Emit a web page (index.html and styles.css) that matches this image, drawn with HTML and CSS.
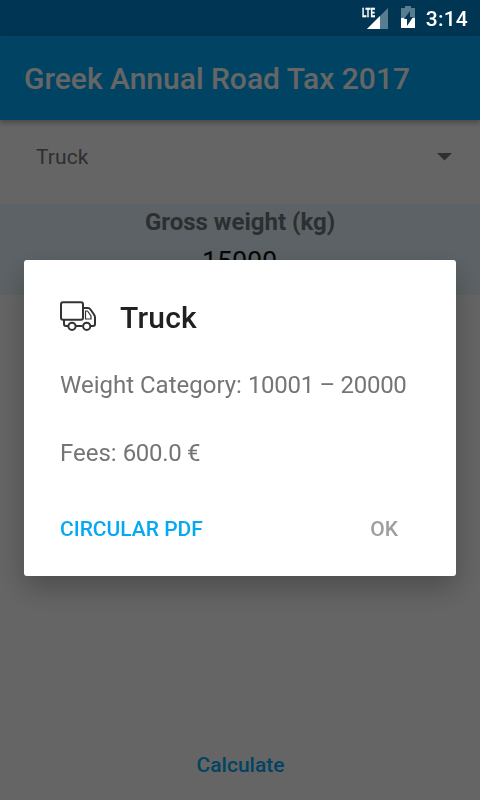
FILE: index.html
```
<!DOCTYPE html>
<html lang="en">
  <head>
    <meta charset="UTF-8" />
    <meta name="viewport" content="width=device-width, initial-scale=1.0" />
    <title>Greek Annual Road Tax 2017</title>
    <link rel="stylesheet" href="styles.css">
  </head>
  <body>
    <div class="screen">
      <div class="status-spacer"></div>
      <header class="app-bar">
        <h1 class="app-title">Greek Annual Road Tax 2017</h1>
      </header>

      <main class="main-content">
        <div class="spinner">
          <span>Truck</span>
          <svg class="arrow" width="15" height="8" viewBox="0 0 15 8"><path d="M0 0h15L7.5 7.5z" fill="currentColor" /></svg>
        </div>
        <section class="weight">
          <div class="weight-label">Gross weight (kg)</div>
          <div class="weight-value">15000</div>
        </section>
      </main>

      <footer class="bottom-bar">
        <button class="calculate-btn">Calculate</button>
      </footer>
    </div>

    <!-- Result dialog -->
    <div class="overlay">
      <div class="dialog" role="dialog">
        <div class="dialog-header">
          <svg width="36" height="36" viewBox="0 0 36 36" fill="none" stroke="#333" stroke-width="2">
            <rect x="1" y="3.200" width="22" height="17.500" rx="2" />
            <path d="M23 9h5q1.500 0 2.500 1.500l3.500 5q1 1.500 1 3v6.500q0 2-2 2h-2M4 21v4q0 2 2 2h2M16 27h6.500" />
            <path d="M25.500 20v-8h2l3.500 5v3z" stroke-width="1.200" />
            <circle cx="12" cy="27.300" r="3.600" />
            <circle cx="26.700" cy="27.300" r="3.600" />
          </svg>
          <h2 class="dialog-title">Truck</h2>
        </div>
        <p class="dialog-text">Weight Category: <span class="value">10001 – 20000</span></p>
        <p class="dialog-text">Fees: <span class="value">600.0 €</span></p>
        <div class="dialog-actions">
          <button class="link-btn">CIRCULAR PDF</button>
          <button class="ok-btn">OK</button>
        </div>
      </div>
    </div>

    <!-- System status bar stays above the overlay -->
    <div class="status-bar">
      <svg class="signal" width="27" height="24" viewBox="0 0 27 24">
        <path d="M26 3v21H5z" fill="#fff" fill-opacity=".35" />
        <path d="M18 11v13H5z" fill="#fff" />
        <text class="lte" x="0" y="12" textLength="13" lengthAdjust="spacingAndGlyphs">LTE</text>
      </svg>
      <svg class="battery" width="14" height="22" viewBox="0 0 14 22">
        <path d="M0 2h4V0h6v2h4v10H0z" fill="#fff" fill-opacity=".35" />
        <path d="M0 12h14v10H0z" fill="#fff" />
        <path d="M9 5v6h3l-6 9v-7H3z" fill="#013654" />
      </svg>
      <span class="clock">3:14</span>
    </div>
  </body>
</html>
```
FILE: styles.css
```
* {
  margin: 0;
  padding: 0;
  box-sizing: border-box;
}

body {
  font-family: Roboto, sans-serif;
  height: 100vh;
  overflow: hidden;
}

button {
  background: none;
  border: none;
  font-family: inherit;
  font-size: 21px;
  font-weight: 500;
  line-height: 24px;
  cursor: pointer;
}

.screen {
  height: 100vh;
  display: flex;
  flex-direction: column;
  background: #fcfcfc;
}

.status-spacer {
  height: 36px;
  background: #0288d1;
}

.app-bar {
  height: 84px;
  padding: 0 24px;
  display: flex;
  align-items: center;
  background: #03a9f4;
  box-shadow: 0 2px 6px rgba(0, 0, 0, 0.35);
  z-index: 1;
}

.app-title {
  font-size: 30px;
  font-weight: 500;
  line-height: 36px;
  padding-top: 2px;
  color: white;
  white-space: nowrap;
}

.main-content {
  flex: 1;
}

.spinner {
  height: 72px;
  margin-bottom: 12px;
  padding: 2px 28px 0 36px;
  display: flex;
  justify-content: space-between;
  align-items: center;
  font-size: 21px;
  letter-spacing: 0.1px;
  color: #757575;
}

.arrow {
  margin-top: -1px;
}

.weight {
  height: 91px;
  padding-top: 4px;
  text-align: center;
  background: #e6f5fc;
}

.weight-label {
  font-size: 24px;
  font-weight: bold;
  line-height: 28px;
  color: #6e777a;
}

.weight-value {
  margin-top: 10px;
  padding-right: 1px;
  font-size: 27px;
  line-height: 32px;
  letter-spacing: -0.2px;
  color: #111;
}

.bottom-bar {
  height: 72px;
  padding: 2px 0 0 1px;
  display: flex;
  justify-content: center;
  align-items: center;
}

.calculate-btn {
  color: #03a9f4;
}

.overlay {
  position: fixed;
  inset: 0;
  z-index: 2;
  padding: 36px 24px 0;
  display: flex;
  justify-content: center;
  align-items: center;
  background: rgba(0, 0, 0, 0.6);
}

.dialog {
  width: 432px;
  height: 316px;
  padding: 36px 36px 34px;
  display: flex;
  flex-direction: column;
  background: white;
  border-radius: 3px;
  box-shadow: 0 12px 30px rgba(0, 0, 0, 0.26);
}

.dialog-header {
  height: 42px;
  flex-shrink: 0;
  display: flex;
  align-items: center;
  gap: 24px;
}

.dialog-title {
  font-size: 30px;
  font-weight: 500;
  letter-spacing: 0.2px;
  color: #212121;
}

.dialog-text {
  font-size: 24px;
  line-height: 28px;
  color: #757575;
  margin-top: 33px;
}

.dialog-text + .dialog-text {
  margin-top: 40px;
}

.value {
  letter-spacing: -0.3px;
}

.dialog-actions {
  margin-top: 50px;
  padding-right: 22px;
  display: flex;
  justify-content: space-between;
}

.link-btn {
  color: #03a9f4;
}

.ok-btn {
  color: #9e9e9e;
}

.status-bar {
  position: fixed;
  top: 0;
  left: 0;
  right: 0;
  z-index: 3;
  height: 36px;
  padding: 2px 12px 0 0;
  display: flex;
  justify-content: flex-end;
  align-items: center;
  color: white;
}

.lte {
  fill: white;
  stroke: white;
  stroke-width: 0.3px;
  font-size: 13px;
  font-weight: bold;
}

.signal {
  margin: 0 12px 4px 0;
}

.battery {
  margin: 0 11px 4px 0;
}

.clock {
  font-size: 21px;
  font-weight: 500;
  letter-spacing: 0.2px;
}
```
